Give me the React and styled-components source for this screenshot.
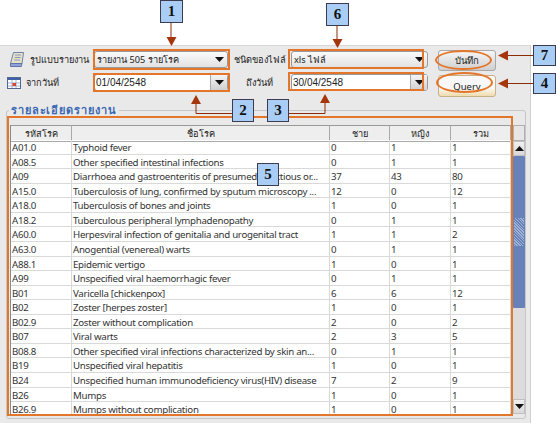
import { createGlobalStyle, styled } from 'styled-components'

const rows = [
  ['A01.0', 'Typhoid fever', 0, 1, 1],
  ['A08.5', 'Other specified intestinal infections', 0, 1, 1],
  ['A09', 'Diarrhoea and gastroenteritis of presumed infectious or...', 37, 43, 80],
  ['A15.0', 'Tuberculosis of lung, confirmed by sputum microscopy ...', 12, 0, 12],
  ['A18.0', 'Tuberculosis of bones and joints', 1, 0, 1],
  ['A18.2', 'Tuberculous peripheral lymphadenopathy', 0, 1, 1],
  ['A60.0', 'Herpesviral infection of genitalia and urogenital tract', 1, 1, 2],
  ['A63.0', 'Anogential (venereal) warts', 0, 1, 1],
  ['A88.1', 'Epidemic vertigo', 1, 0, 1],
  ['A99', 'Unspecified viral haemorrhagic fever', 0, 1, 1],
  ['B01', 'Varicella [chickenpox]', 6, 6, 12],
  ['B02', 'Zoster [herpes zoster]', 1, 0, 1],
  ['B02.9', 'Zoster without complication', 2, 0, 2],
  ['B07', 'Viral warts', 2, 3, 5],
  ['B08.8', 'Other specified viral infections characterized by skin an...', 0, 1, 1],
  ['B19', 'Unspecified viral hepatitis', 1, 0, 1],
  ['B24', 'Unspecified human immunodeficiency virus(HIV) disease', 7, 2, 9],
  ['B26', 'Mumps', 1, 0, 1],
  ['B26.9', 'Mumps without complication', 1, 0, 1],
]

const columns = '61px 258px 60px 61px 60px'

function ComboArrow({ boxed }) {
  return (
    <Arrow $boxed={boxed}>
      <svg width="9" height="5" viewBox="0 0 9 5">
        <path d="M0 0h9L4.5 5z" fill="#111" />
      </svg>
    </Arrow>
  )
}

function ReportIcon() {
  return (
    <svg width="14" height="15" viewBox="0 0 14 15">
      <path d="M3.5.5h10l-1.5 11H.5z" fill="#e6e2c8" stroke="#6f82ad" />
      <path d="M.5 11.5h11.5l-.7 3H.5z" fill="#8fa3d8" stroke="#5f74a8" />
      <path d="M5 3h6M4.6 5.5h6M4.2 8h6" stroke="#8a97b8" />
    </svg>
  )
}

function CalendarIcon() {
  return (
    <svg width="14" height="12" viewBox="0 0 14 12">
      <rect x="0.5" y="0.5" width="13" height="11" fill="#fff" stroke="#51698f" />
      <rect x="1" y="1" width="12" height="2" fill="#3f62a8" />
      <path d="M1 6h12M1 9h12M5 3v8M9 3v8" stroke="#9fb0cc" />
      <rect x="5.5" y="6" width="3.5" height="3" fill="#d8452e" />
    </svg>
  )
}

function Callout({ x, y, w = 22, h = 23, children }) {
  return (
    <Badge style={{ left: x, top: y, width: w, height: h }}>{children}</Badge>
  )
}

function App() {
  return (
    <Page>
      <GlobalStyle />
      <Panel>
        <Toolbar>
          <Label $indent={3} $gap={6}>
            <ReportIcon />
            รูปแบบรายงาน
          </Label>
          <Combo>
            <ComboText>รายงาน 505 รายโรค</ComboText>
            <ComboArrow />
          </Combo>
          <MidLabel>ชนิดของไฟล์</MidLabel>
          <Combo>
            <ComboText>xls ไฟล์</ComboText>
            <ComboArrow />
          </Combo>
          <ActionButton>บันทึก</ActionButton>

          <Label $indent={0} $gap={5}>
            <CalendarIcon />
            จากวันที่
          </Label>
          <DateBox>
            <DateText>01/04/2548</DateText>
            <ComboArrow boxed />
          </DateBox>
          <MidLabel>ถึงวันที่</MidLabel>
          <DateBox>
            <DateText>30/04/2548</DateText>
            <ComboArrow boxed />
          </DateBox>
          <ActionButton $focus>Query</ActionButton>
        </Toolbar>

        <Group>
          <GroupTitle>รายละเอียดรายงาน</GroupTitle>
          <TableWrap>
            <Table>
              <HeaderRow>
                <HeaderCell>รหัสโรค</HeaderCell>
                <HeaderCell>ชื่อโรค</HeaderCell>
                <HeaderCell>ชาย</HeaderCell>
                <HeaderCell>หญิง</HeaderCell>
                <HeaderCell>รวม</HeaderCell>
              </HeaderRow>
              {rows.map((row) => (
                <Row key={row[0]}>
                  {row.map((value, i) => (
                    <Cell key={i}>{value}</Cell>
                  ))}
                </Row>
              ))}
            </Table>
            <Scrollbar>
              <ScrollHead />
              <ScrollButton>
                <svg width="9" height="5" viewBox="0 0 9 5">
                  <path d="M4.5 0L9 5H0z" fill="#111" />
                </svg>
              </ScrollButton>
              <Thumb>
                <Grip />
              </Thumb>
              <Track />
              <ScrollButton>
                <svg width="9" height="5" viewBox="0 0 9 5">
                  <path d="M0 0h9L4.5 5z" fill="#111" />
                </svg>
              </ScrollButton>
            </Scrollbar>
          </TableWrap>
        </Group>
      </Panel>

      {/* orange markup drawn over the screenshot */}
      <Mark style={{ left: 93, top: 49, width: 137, height: 21 }} />
      <Mark style={{ left: 93, top: 73, width: 137, height: 19 }} />
      <Mark style={{ left: 288, top: 49, width: 136, height: 20 }} />
      <Mark style={{ left: 288, top: 72, width: 136, height: 19 }} />
      <Mark style={{ left: 7, top: 116, width: 506, height: 300 }} />
      <Ring style={{ left: 435, top: 50, width: 57, height: 20 }} />
      <Ring style={{ left: 436, top: 72, width: 57, height: 21 }} />

      <Callout x={160} y={0} w={23}>1</Callout>
      <Callout x={326} y={3} w={23}>6</Callout>
      <Callout x={533} y={45} w={23} h={21}>7</Callout>
      <Callout x={533} y={73} w={23} h={21}>4</Callout>
      <Callout x={232} y={99}>2</Callout>
      <Callout x={267} y={99}>3</Callout>
      <Callout x={257} y={163}>5</Callout>

      <Pointers width="556" height="423" viewBox="0 0 556 423">
        <g stroke="#8a2c08" fill="none">
          <path d="M171 23v20" />
          <path d="M337 25v20" />
          <path d="M533 55.5h-28" />
          <path d="M533 83.5h-28" />
          <path d="M232 113.5h-36v-12" />
          <path d="M289 113.5h36v-12" />
        </g>
        <g fill="#a5360c">
          <path d="M166.5 37h10l-5 9z" />
          <path d="M332.5 39h10l-5 9z" />
          <path d="M498 55.5l10-5v10z" />
          <path d="M498 83.5l10-5v10z" />
          <path d="M196 95l5 9h-10z" />
          <path d="M325 94l5 9h-10z" />
        </g>
      </Pointers>
    </Page>
  )
}

export default App

const GlobalStyle = createGlobalStyle`
  html, body {
    margin: 0;
    padding: 0;
    background: #fff;
  }
  body {
    font-family: "Noto Sans", "Liberation Sans", sans-serif;
    font-size: 11px;
    color: #222;
  }
`
const Page = styled.div`
  position: relative;
  width: 556px;
  height: 423px;
  overflow: hidden;
  padding-top: 45px;
  box-sizing: border-box;
`
const Panel = styled.div`
  width: 531px;
  height: 378px;
  background: #e9e9e9;
  border-top: 1px solid #d8d8d8;
  border-right: 1px solid #cfcfcf;
  box-sizing: border-box;
  padding: 5px 0 0 6px;
`
const Toolbar = styled.div`
  display: grid;
  grid-template-columns: 87px 134px 63px 137px 68px;
  grid-template-rows: 17px 17px;
  row-gap: 6px;
  align-items: center;
  padding-left: 1px;
`
const Label = styled.div`
  display: flex;
  align-items: center;
  gap: ${(props) => props.$gap}px;
  padding-left: ${(props) => props.$indent}px;
  font-size: 9.2px;
  white-space: nowrap;
`
const MidLabel = styled.div`
  font-size: 9.2px;
  white-space: nowrap;
  text-align: center;
`
const Combo = styled.div`
  display: flex;
  align-items: center;
  height: 17px;
  background: linear-gradient(#fafafa, #e2e2e2);
  border: 1px solid #9a9a9a;
  border-radius: 3px;
  box-sizing: border-box;
  padding-left: 2px;
`
const ComboText = styled.span`
  flex: 1;
  font-size: 9.2px;
  white-space: nowrap;
`
const DateBox = styled(Combo)`
  background: #fff;
  padding-left: 1px;
`
const DateText = styled.span`
  flex: 1;
  font-family: "Liberation Sans", sans-serif;
  font-size: 10px;
`
const Arrow = styled.span`
  display: flex;
  align-items: center;
  justify-content: center;
  width: 16px;
  height: 100%;
  background: ${(props) => (props.$boxed ? 'linear-gradient(#f4f4f4, #d0d0d0)' : 'transparent')};
  border-left: ${(props) => (props.$boxed ? '1px solid #aaa' : 'none')};
`
const ActionButton = styled.button`
  justify-self: end;
  align-self: start;
  width: 58px;
  height: ${(props) => (props.$focus ? '22px' : '21px')};
  margin-top: ${(props) => (props.$focus ? '1px' : '-1px')};
  padding: 0;
  font-family: inherit;
  font-size: 9.5px;
  color: #222;
  background: ${(props) =>
    props.$focus
      ? 'linear-gradient(#f8f8f8 60%, #f0dcae)'
      : 'linear-gradient(#f6f6f6, #cfcfcf)'};
  border: 1px solid ${(props) => (props.$focus ? '#c8b088' : '#a8a8a8')};
  border-radius: 3px;
`
const Group = styled.fieldset`
  margin: 13px 0 0 0;
  padding: 0;
  width: 520px;
  height: 315px;
  box-sizing: border-box;
  border: 1px solid #c6c6c6;
  border-radius: 3px;
`
const GroupTitle = styled.legend`
  margin-left: 2px;
  padding: 0 2px;
  font-size: 11px;
  letter-spacing: 0.9px;
  font-weight: 700;
  color: #3a68b4;
  line-height: 12px;
`
const TableWrap = styled.div`
  display: flex;
  gap: 2px;
  padding: 9px 0 0 3px;
`
const Table = styled.div`
  width: 501px;
  height: 289px;
  overflow: hidden;
  background: #fff;
  border-left: 1px solid #8a8a8a;
  box-sizing: border-box;
`
const HeaderRow = styled.div`
  display: grid;
  grid-template-columns: ${columns};
  height: 15px;
  background: #eeeeee;
`
const HeaderCell = styled.div`
  display: flex;
  align-items: center;
  justify-content: center;
  font-size: 9.2px;
  border-right: 1px solid #a9a9a9;
  border-bottom: 1px solid #a9a9a9;
  border-top: 1px solid #999;
`
const Row = styled.div`
  display: grid;
  grid-template-columns: ${columns};
  height: 14.57px;
  box-sizing: border-box;
  border-bottom: 1px solid #d9d9d9;
`
const Cell = styled.div`
  padding-left: 1px;
  font-family: "Noto Sans", sans-serif;
  font-size: 9.7px;
  letter-spacing: -0.28px;
  line-height: 15px;
  white-space: nowrap;
  overflow: hidden;
  border-right: 1px solid #d9d9d9;
  color: #333;
`
const Scrollbar = styled.div`
  display: flex;
  flex-direction: column;
  width: 12px;
  height: 289px;
  background: #dcdcdc;
`
const ScrollHead = styled.div`
  height: 16px;
  background: #e6e6e6;
  border: 1px solid #b0b0b0;
  box-sizing: border-box;
`
const ScrollButton = styled.div`
  display: flex;
  align-items: center;
  justify-content: center;
  height: 15px;
  background: linear-gradient(#f0f0f0, #d8d8d8);
  border: 1px solid #c0c0c0;
  box-sizing: border-box;
`
const Thumb = styled.div`
  display: flex;
  align-items: center;
  justify-content: center;
  height: 152px;
  background: #6782ba;
  border-radius: 1px;
`
const Grip = styled.div`
  width: 10px;
  height: 28px;
  background: repeating-linear-gradient(45deg, #9fb2d6 0 1px, #6782ba 1px 2px);
`
const Track = styled.div`
  flex: 1;
`
const Mark = styled.div`
  position: absolute;
  box-sizing: border-box;
  border: 2px solid #e4762c;
  pointer-events: none;
`
const Ring = styled.div`
  position: absolute;
  box-sizing: border-box;
  border: 2px solid #e4762c;
  border-radius: 50%;
  pointer-events: none;
`
const Badge = styled.div`
  position: absolute;
  display: flex;
  align-items: center;
  justify-content: center;
  box-sizing: border-box;
  background: #a9cdf5;
  border: 1px solid #3c3c50;
  font-family: "Liberation Serif", serif;
  font-size: 15px;
  font-weight: 700;
  color: #111;
`
const Pointers = styled.svg`
  position: absolute;
  left: 0;
  top: 0;
  pointer-events: none;
`
